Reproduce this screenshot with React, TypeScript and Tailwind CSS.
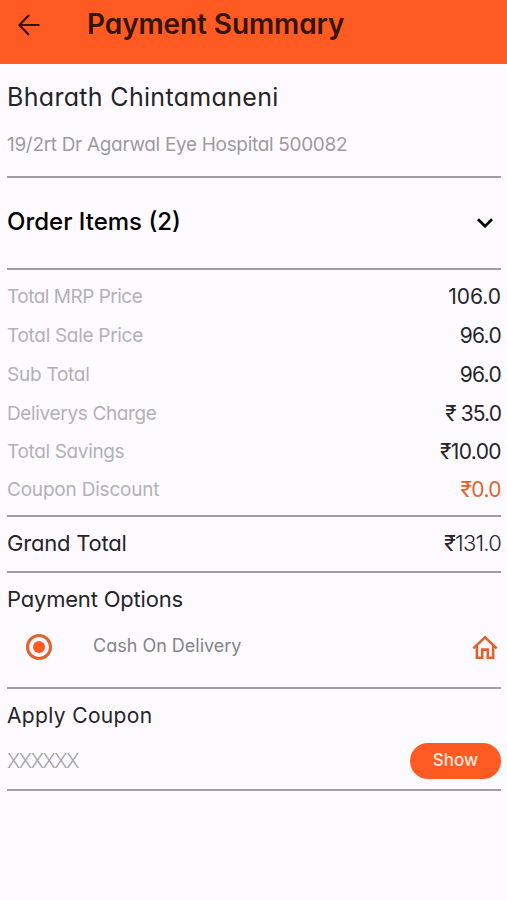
import React from "react";

type PriceRow = {
  label: string;
  value: string;
  height: string;
  labelClass: string;
  valueClass: string;
};

const rows: PriceRow[] = [
  { label: "Total MRP Price", value: "106.0", height: "h-[39px]", labelClass: "tracking-[-0.5px]", valueClass: "text-[#262429]" },
  { label: "Total Sale Price", value: "96.0", height: "h-[40px]", labelClass: "tracking-[-0.3px]", valueClass: "text-[#262429] tracking-[-0.7px]" },
  { label: "Sub Total", value: "96.0", height: "h-[38px]", labelClass: "tracking-[-0.25px]", valueClass: "text-[#262429] tracking-[-0.7px]" },
  { label: "Deliverys Charge", value: "₹ 35.0", height: "h-[39px]", labelClass: "tracking-[-0.35px]", valueClass: "text-[#262429] tracking-[-0.9px]" },
  { label: "Total Savings", value: "₹10.00", height: "h-[38px]", labelClass: "tracking-[-0.35px]", valueClass: "text-[#262429] tracking-[-0.6px]" },
  { label: "Coupon Discount", value: "₹0.0", height: "h-[38px]", labelClass: "tracking-[-0.2px]", valueClass: "text-[#e2622f] tracking-[-0.6px]" },
];

function BackArrow() {
  return (
    <svg width="24" height="24" viewBox="0 0 24 24" fill="none" stroke="#35140a" strokeWidth="2.2">
      <path d="M22.5 12H3M12 2L2.5 12L12 22" />
    </svg>
  );
}

function HomeIcon() {
  return (
    <svg width="26" height="25" viewBox="0 0 26 25" fill="none" stroke="#e2622f" strokeWidth="2.6">
      <path d="M1.3 13.4L13 2.2L24.7 13.4" />
      <path d="M4.9 10.5V22.7H10.2V14.6H15.8V22.7H21.1V10.5" />
    </svg>
  );
}

export default function App() {
  return (
    <div className="flex h-[900px] w-[507px] flex-col overflow-hidden whitespace-nowrap bg-[#fdfbff] font-['Inter','Noto_Sans',sans-serif] text-[#262429] [font-feature-settings:'cv11','ss03']">
      <header className="flex h-[64px] shrink-0 items-start bg-[#ff5a22] pt-[9px]">
        <div className="flex h-[32px] w-[87px] items-center pl-[17px]">
          <BackArrow />
        </div>
        <h1 className="pt-px text-[28px] leading-[29px] font-semibold tracking-[-0.1px] text-[#35140a]">Payment Summary</h1>
      </header>

      <main className="flex flex-col pr-[6px] pl-[7px]">
        <section className="flex h-[114px] flex-col border-b-2 border-[#9f9ea0] pt-[18px]">
          <p className="text-[25px] leading-[31px] tracking-[0.32px]">Bharath Chintamaneni</p>
          <p className="mt-[16px] text-[19px] leading-[31px] tracking-[-0.32px] text-[#9c9b9e]">19/2rt Dr Agarwal Eye Hospital 500082</p>
        </section>

        <section className="flex h-[92px] items-center justify-between border-b-2 border-[#9f9ea0] pb-[2px] text-black">
          <h2 className="text-[24px] leading-[30px] font-medium">Order Items (2)</h2>
          <svg className="mt-[2px] mr-[8px]" width="16" height="10" viewBox="0 0 16 10" fill="none" stroke="currentColor" strokeWidth="2.7">
            <path d="M1 1.3L8 8.2L15 1.3" />
          </svg>
        </section>

        <section className="flex h-[247px] flex-col border-b-2 border-[#9f9ea0] pt-[7px]">
          {rows.map((row) => (
            <div key={row.label} className={`flex items-center justify-between ${row.height}`}>
              <span className={`pt-px text-[19px] text-[#b2b1b4] ${row.labelClass}`}>{row.label}</span>
              <span className={`text-[21px] ${row.valueClass}`}>{row.value}</span>
            </div>
          ))}
        </section>

        <section className="flex h-[56px] items-center justify-between border-b-2 border-[#9f9ea0] pb-px text-[22px]">
          <span className="tracking-[-0.2px]">Grand Total</span>
          <span className="font-light tracking-[-0.8px]">
            <span className="font-normal">₹</span>131.0
          </span>
        </section>

        <section className="h-[116px] border-b-2 border-[#9f9ea0] pt-[11px]">
          <h2 className="text-[22px] leading-[30px] tracking-[-0.2px]">Payment Options</h2>
          <div className="mt-[17px] flex h-[32px] items-center pl-[19px]">
            <div className="flex size-[26px] items-center justify-center rounded-full border-3 border-[#e2622f]">
              <div className="size-[12px] rounded-full bg-[#ff5a22]" />
            </div>
            <span className="ml-[41px] pb-[2px] text-[18px] leading-[30px] text-[#858488]">Cash On Delivery</span>
            <div className="mr-[3px] ml-auto">
              <HomeIcon />
            </div>
          </div>
        </section>

        <section className="h-[102px] border-b-2 border-[#9f9ea0] pt-[12px]">
          <h2 className="text-[21px] leading-[30px] tracking-[0.35px]">Apply Coupon</h2>
          <div className="mt-[12px] flex h-[36px] items-center justify-between">
            <span className="text-[20px] font-light tracking-[-1.4px] text-[#a3a2a6]">XXXXXX</span>
            <button className="h-[36px] w-[91px] rounded-full bg-[#ff5a22] text-[17px] font-medium text-[#ffe9df]">Show</button>
          </div>
        </section>
      </main>
    </div>
  );
}
